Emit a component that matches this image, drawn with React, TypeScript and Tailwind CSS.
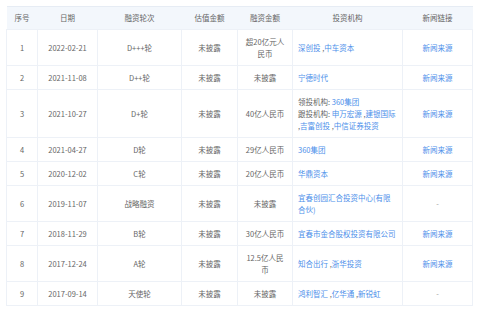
import React from 'react';

type Row = {
  no: number;
  date: string;
  round: string;
  value: string;
  amount: string;
  investors: React.ReactNode;
  news: boolean;
};

const A: React.FC<{ children: React.ReactNode }> = ({ children }) => (
  <span className="text-[#4d8fea]">{children}</span>
);

const rows: Row[] = [
  { no: 1, date: '2022-02-21', round: 'D+++轮', value: '未披露', amount: '超20亿元人民币', investors: <><A>深创投</A> ,<A>中车资本</A></>, news: true },
  { no: 2, date: '2021-11-08', round: 'D++轮', value: '未披露', amount: '未披露', investors: <A>宁德时代</A>, news: true },
  {
    no: 3,
    date: '2021-10-27',
    round: 'D+轮',
    value: '未披露',
    amount: '40亿人民币',
    investors: (
      <>
        领投机构: <A>360集团</A>
        <br />
        跟投机构: <A>申万宏源</A> ,<A>建银国际</A>
        <br />
        ,<A>吉富创投</A> ,<A>中信证券投资</A>
      </>
    ),
    news: true,
  },
  { no: 4, date: '2021-04-27', round: 'D轮', value: '未披露', amount: '29亿人民币', investors: <A>360集团</A>, news: true },
  { no: 5, date: '2020-12-02', round: 'C轮', value: '未披露', amount: '20亿人民币', investors: <A>华鼎资本</A>, news: true },
  { no: 6, date: '2019-11-07', round: '战略融资', value: '未披露', amount: '未披露', investors: <A>宜春创园汇合投资中心(有限合伙)</A>, news: false },
  { no: 7, date: '2018-11-29', round: 'B轮', value: '未披露', amount: '30亿人民币', investors: <A>宜春市金合股权投资有限公司</A>, news: true },
  { no: 8, date: '2017-12-24', round: 'A轮', value: '未披露', amount: '12.5亿人民币', investors: <><A>知合出行</A> ,<A>浙华投资</A></>, news: true },
  { no: 9, date: '2017-09-14', round: '天使轮', value: '未披露', amount: '未披露', investors: <><A>鸿利智汇</A> ,<A>亿华通</A> ,<A>新锐虹</A></>, news: false },
];

const headers = ['序号', '日期', '融资轮次', '估值金额', '融资金额', '投资机构', '新闻链接'];
const widths = ['w-[31px]', 'w-[60px]', 'w-[84px]', 'w-[56px]', 'w-[55px]', 'w-[110px]', 'w-[70px]'];

const cell = 'border border-[#edf1f7] px-[6px] pt-[6px] pb-[5px] align-middle text-center';

export default function App() {
  return (
    <div className="w-[480px] h-[311px] bg-white p-[6px] font-['Noto_Sans_CJK_SC','Noto_Sans',sans-serif] text-[7.5px] leading-[12px] text-[#666]">
      <table className="table-fixed border-collapse w-[466px]">
        <colgroup>
          {widths.map((w, i) => (
            <col key={i} className={w} />
          ))}
        </colgroup>
        <thead>
          <tr className="bg-[#f3f7fc] border-t border-[#e6ecf4]">
            {headers.map((h) => (
              <th key={h} className="h-[23px] font-normal text-center text-[#666] align-middle">
                {h}
              </th>
            ))}
          </tr>
        </thead>
        <tbody>
          {rows.map((r) => (
            <tr key={r.no}>
              <td className={cell}>{r.no}</td>
              <td className={cell}>{r.date}</td>
              <td className={cell}>{r.round}</td>
              <td className={cell}>{r.value}</td>
              <td className={cell + ' px-[5px]'}>{r.amount}</td>
              <td className="border border-[#edf1f7] pl-[5px] pr-[5px] pt-[6px] pb-[5px] align-middle text-left">{r.investors}</td>
              <td className={cell}>{r.news ? <A>新闻来源</A> : <span className="text-[#999]">-</span>}</td>
            </tr>
          ))}
        </tbody>
      </table>
    </div>
  );
}
